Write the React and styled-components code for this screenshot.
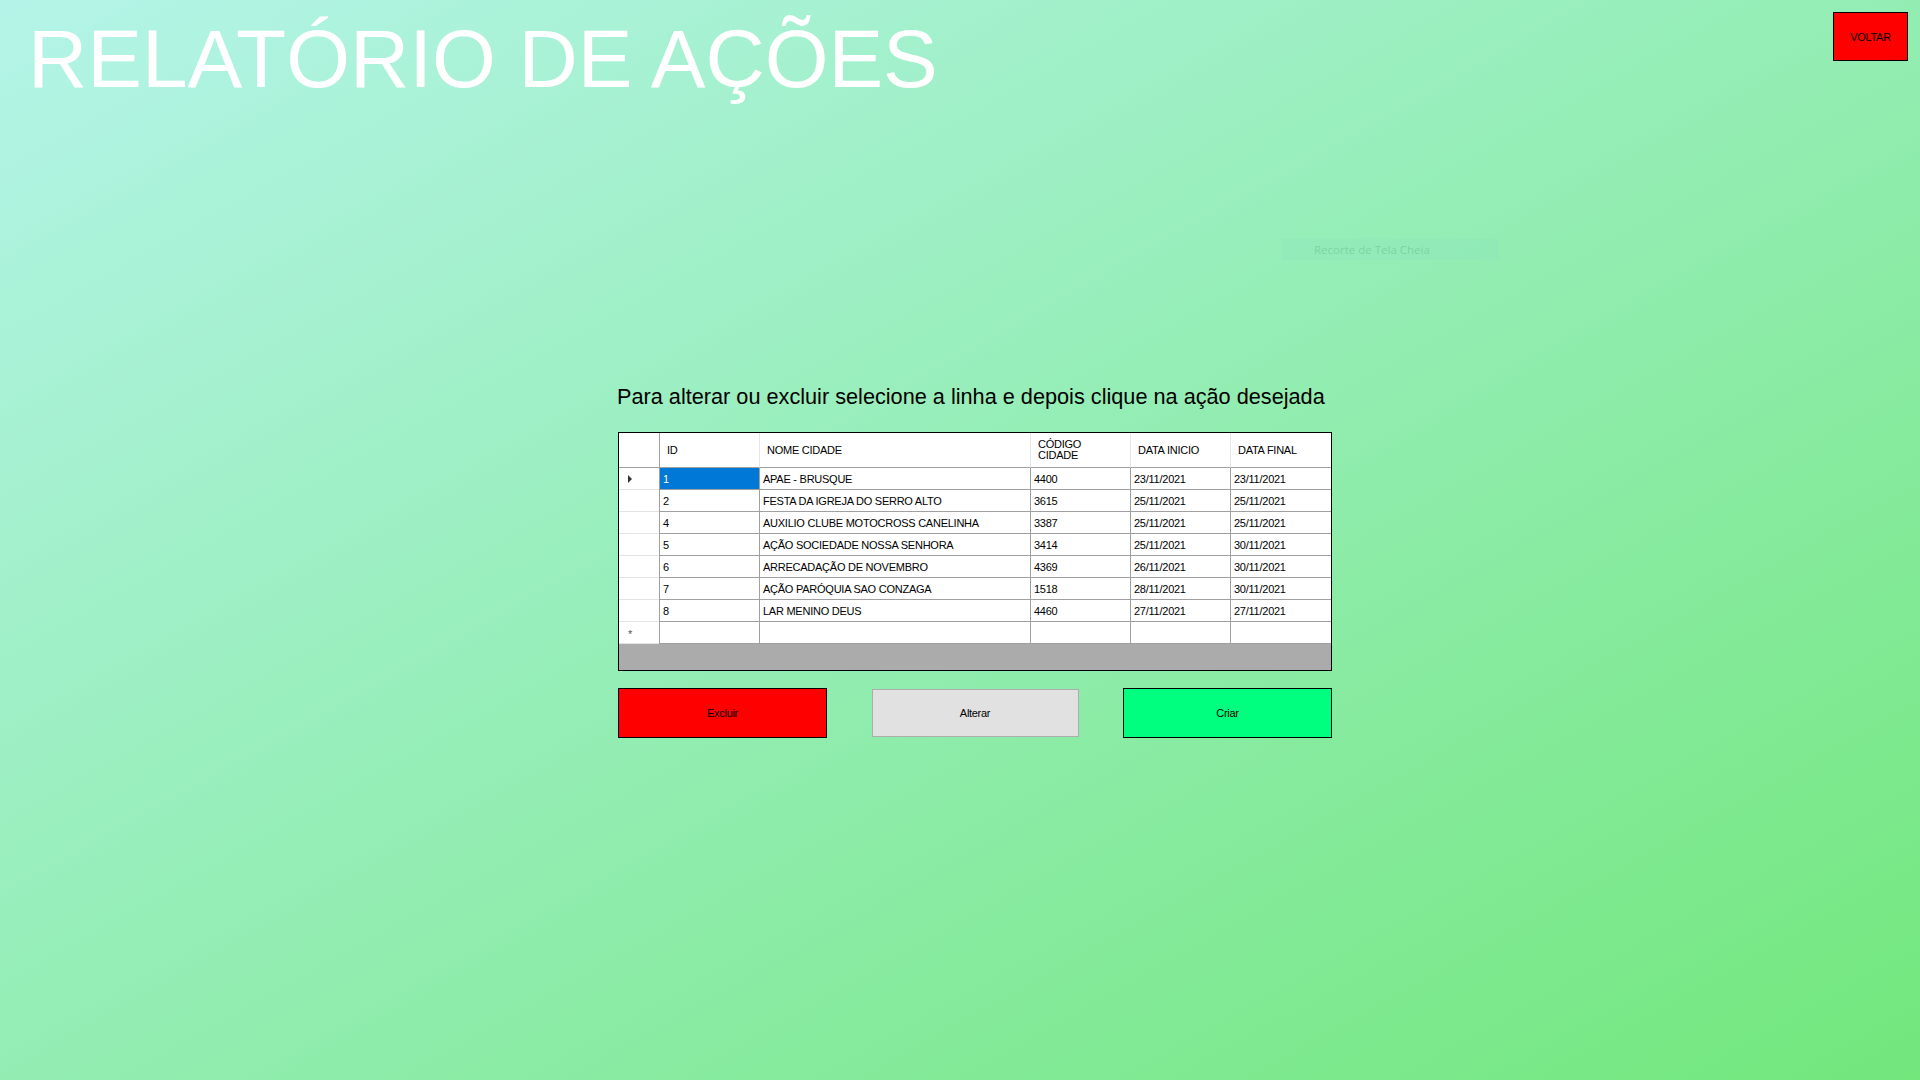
import React from "react";
import styled, { createGlobalStyle } from "styled-components";

const GlobalStyle = createGlobalStyle`
  html, body {
    margin: 0;
    padding: 0;
  }
  body {
    font-family: "Liberation Sans", Arial, sans-serif;
  }
`;

const acoes = [
  { id: "1", nome: "APAE - BRUSQUE", codigo: "4400", inicio: "23/11/2021", fim: "23/11/2021" },
  { id: "2", nome: "FESTA DA IGREJA DO SERRO ALTO", codigo: "3615", inicio: "25/11/2021", fim: "25/11/2021" },
  { id: "4", nome: "AUXILIO CLUBE MOTOCROSS CANELINHA", codigo: "3387", inicio: "25/11/2021", fim: "25/11/2021" },
  { id: "5", nome: "AÇÃO SOCIEDADE NOSSA SENHORA", codigo: "3414", inicio: "25/11/2021", fim: "30/11/2021" },
  { id: "6", nome: "ARRECADAÇÃO DE NOVEMBRO", codigo: "4369", inicio: "26/11/2021", fim: "30/11/2021" },
  { id: "7", nome: "AÇÃO PARÓQUIA SAO CONZAGA", codigo: "1518", inicio: "28/11/2021", fim: "30/11/2021" },
  { id: "8", nome: "LAR MENINO DEUS", codigo: "4460", inicio: "27/11/2021", fim: "27/11/2021" },
];

const App = () => {
  return (
    <>
      <GlobalStyle />
      <Page>
        <TopBar>
          <Title>RELATÓRIO DE AÇÕES</Title>
          <WinButton $bg="#ff0000" $w={75} $h={49}>
            VOLTAR
          </WinButton>
        </TopBar>

        <Ghost>Recorte de Tela Cheia</Ghost>

        <Content>
          <Instrucao>
            Para alterar ou excluir selecione a linha e depois clique na ação desejada
          </Instrucao>

          <GridBox>
            <Grid>
              <HeadCell $rowHeader />
              <HeadCell>ID</HeadCell>
              <HeadCell>NOME CIDADE</HeadCell>
              <HeadCell>
                CÓDIGO
                <br />
                CIDADE
              </HeadCell>
              <HeadCell>DATA INICIO</HeadCell>
              <HeadCell>DATA FINAL</HeadCell>

              {acoes.map((a, i) => (
                <React.Fragment key={a.id}>
                  <RowHeader>{i === 0 && <Arrow />}</RowHeader>
                  <Cell $selected={i === 0}>{a.id}</Cell>
                  <Cell>{a.nome}</Cell>
                  <Cell>{a.codigo}</Cell>
                  <Cell>{a.inicio}</Cell>
                  <Cell>{a.fim}</Cell>
                </React.Fragment>
              ))}

              <RowHeader>
                <Star>*</Star>
              </RowHeader>
              <Cell />
              <Cell />
              <Cell />
              <Cell />
              <Cell />
            </Grid>
          </GridBox>

          <Actions>
            <WinButton $bg="#ff0000" $w={209} $h={50}>
              Excluir
            </WinButton>
            <WinButton $bg="#e1e1e1" $border="#adadad" $w={207} $h={48}>
              Alterar
            </WinButton>
            <WinButton $bg="#00ff7f" $w={209} $h={50}>
              Criar
            </WinButton>
          </Actions>
        </Content>
      </Page>
    </>
  );
};

const Page = styled.div`
  position: relative;
  min-height: 100vh;
  width: 100%;
  background: linear-gradient(to bottom right, #b4f4e8 0%, #93edb3 50%, #72e77c 100%);
  overflow: hidden;
`;

const TopBar = styled.div`
  display: flex;
  justify-content: space-between;
  align-items: flex-start;
  padding: 12px 12px 0 28px;
`;

const Title = styled.h1`
  margin: 0;
  font-family: "Liberation Sans", Arial, sans-serif;
  font-weight: 400;
  font-size: 82px;
  line-height: 94px;
  color: #ffffff;
`;

const Ghost = styled.div`
  position: absolute;
  left: 1282px;
  top: 239px;
  width: 217px;
  height: 21px;
  box-sizing: border-box;
  padding-left: 32px;
  background: rgba(140, 228, 190, 0.35);
  color: rgba(95, 185, 130, 0.45);
  font-family: "Open Sans", "Noto Sans", sans-serif;
  font-size: 11.5px;
  line-height: 21px;
  white-space: nowrap;
`;

const Content = styled.div`
  display: flex;
  flex-direction: column;
  width: 714px;
  margin-left: 618px;
  padding-top: 278px;
`;

const Instrucao = styled.p`
  margin: 0 0 23px -1px;
  font-family: "Liberation Sans", Arial, sans-serif;
  font-size: 21.7px;
  line-height: 25px;
  color: #000;
  white-space: nowrap;
`;

const GridBox = styled.div`
  box-sizing: border-box;
  width: 714px;
  height: 239px;
  border: 1px solid #000;
  background: #ababab;
`;

const Grid = styled.div`
  display: grid;
  grid-template-columns: 40px 100px 271px 100px 100px 101px;
  grid-template-rows: 35px repeat(8, 22px);
  background: #fff;
  font-family: "Liberation Sans", Arial, sans-serif;
  font-size: 11px;
  letter-spacing: -0.25px;
  color: #000;
`;

const HeadCell = styled.div`
  box-sizing: border-box;
  display: flex;
  align-items: center;
  padding-left: ${({ $rowHeader }) => ($rowHeader ? "0" : "7px")};
  border-bottom: 1px solid #a0a0a0;
  border-left: ${({ $rowHeader }) => ($rowHeader ? "none" : "1px solid #e6e6e6")};
  &:nth-child(2) {
    border-left: 1px solid #a0a0a0;
  }
  line-height: 11px;
  background: #fff;
`;

const RowHeader = styled.div`
  box-sizing: border-box;
  display: flex;
  align-items: center;
  padding-left: 9px;
  border-bottom: 1px solid #e3e3e3;
  background: #fff;
`;

const Arrow = styled.span`
  width: 0;
  height: 0;
  border-top: 4px solid transparent;
  border-bottom: 4px solid transparent;
  border-left: 4px solid #333;
`;

const Star = styled.span`
  font-size: 11px;
  color: #555;
  padding-top: 3px;
`;

const Cell = styled.div`
  box-sizing: border-box;
  display: flex;
  align-items: center;
  padding-left: 3px;
  border-left: 1px solid #a0a0a0;
  border-bottom: 1px solid #a0a0a0;
  white-space: nowrap;
  overflow: hidden;
  background: ${({ $selected }) => ($selected ? "#0078d7" : "#fff")};
  color: ${({ $selected }) => ($selected ? "#fff" : "#000")};
`;

const Actions = styled.div`
  display: flex;
  justify-content: space-between;
  align-items: center;
  margin-top: 17px;
`;

const WinButton = styled.button`
  box-sizing: border-box;
  width: ${({ $w }) => $w}px;
  height: ${({ $h }) => $h}px;
  padding: 0;
  border: 1px solid ${({ $border }) => $border || "#000"};
  background: ${({ $bg }) => $bg};
  color: #000;
  font-family: "Liberation Sans", Arial, sans-serif;
  font-size: 11px;
  letter-spacing: -0.3px;
  cursor: pointer;
`;

export default App;
